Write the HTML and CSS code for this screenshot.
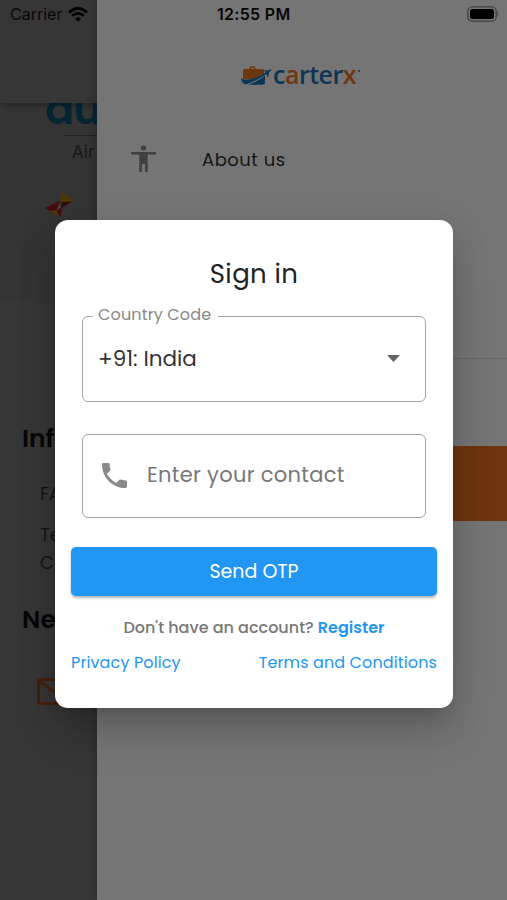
FILE: index.html
```html
<!DOCTYPE html>
<html lang="en">

<head>
    <meta charset="UTF-8">
    <meta name="viewport" content="width=device-width, initial-scale=1.0">
    <title>Sign in</title>
    <link rel="stylesheet" href="styles.css">
</head>

<body>
    <div class="phone">
        <!-- Home page -->
        <div class="home">
            <div class="app-bar"></div>
            <div class="partners">
                <div class="partner-logo">au</div>
                <div class="partner-line"></div>
                <div class="partner-name">Air</div>
                <svg class="partner-icon" width="30" height="26" viewBox="0 0 30 26">
                    <path d="M0 16 16 8 11 19 18 16 15 25Z" fill="#a01c20"/>
                    <path d="M14 9 30 8 13 18 18 9Z" fill="#701c20"/>
                    <path d="M16 0 30 9 21 10 15 9ZM5 19 11 18 15 25Z" fill="#a87a10"/>
                    <path d="m12 17 3-6 1 5Z" fill="#999"/>
                </svg>
            </div>
            <div class="footer">
                <h3>Info</h3>
                <p class="faq">FAQ</p>
                <p>Te<br>C</p>
                <h3 class="news">News</h3>
                <svg class="mail" width="34" height="27" viewBox="0 0 34 27" fill="none" stroke="#98481a" stroke-width="3">
                    <rect x="1.5" y="1.5" width="31" height="24" rx="2"/>
                    <path d="m2 3 15 11L32 3"/>
                </svg>
            </div>
        </div>

        <!-- Side menu -->
        <div class="drawer">
            <div class="brand">
                <svg width="32" height="20" viewBox="0 0 32 20">
                    <path d="M2 5q0-2 2-2h4.500V2.500q0-2.500 3-2.500t3 2.500V3H21q2 0 2 2v3l-10 5H2Z" fill="#f07a1f"/>
                    <path d="M10 3q0-1.500 1.500-1.500T13 3Z" fill="#fff"/>
                    <path d="M0 12q2 2 7 1.500Q17 12 25 6l-4-2 5 .6L31.500 3 28 6.500 27 12l-1.500-4Q17 14 5 18.500 0 17 0 12Z" fill="#1976b8"/>
                    <path d="M7 18.800Q18 15 24 9.500V16q0 2.800-2.500 2.800Z" fill="#1976b8"/>
                </svg>
                <span class="brand-name">c<b>a</b>rter<b>x</b></span><span class="brand-dot"></span>
            </div>
            <div class="menu-item">
                <svg width="25" height="28" viewBox="0 0 25 28" fill="#8c8c8c">
                    <circle cx="12.5" cy="3" r="2.600"/>
                    <path d="M0 7h25v2.500h-8.300V27h-2.700v-8h-3v8H8.300V9.500H0Z"/>
                </svg>
                <span>About us</span>
            </div>
            <div class="menu-divider"></div>
            <div class="menu-banner"></div>
        </div>

        <div class="status-bar">
            <div class="carrier">
                <span>Carrier</span>
                <svg width="20" height="15" viewBox="0 0 20 15" fill="none" stroke="#000" stroke-width="2.700">
                    <path d="M1 5.500q9-8.200 18 0M4.200 8.800q5.800-5 11.600 0"/>
                    <path d="m7 11.500q3-2.300 6 0L10 14.600Z" fill="#000" stroke="none"/>
                </svg>
            </div>
            <span class="time">12:55 PM</span>
            <svg class="battery" width="33" height="16" viewBox="0 0 33 16">
                <rect x="1.800" y=".8" width="28.400" height="14.400" rx="4.500" fill="none" stroke="#000" stroke-opacity=".45" stroke-width="1.300"/>
                <rect x="4" y="3" width="24" height="10" rx="2.500"/>
                <path d="M31.500 5.500q2 2.500 0 5Z" opacity=".5"/>
            </svg>
        </div>

        <!-- Sign in dialog -->
        <div class="overlay">
            <form class="dialog">
                <h2>Sign in</h2>
                <fieldset class="country">
                    <legend>Country Code</legend>
                    <span>+91: India</span>
                    <svg width="13" height="7" viewBox="0 0 13 7"><path d="M0 0h13L6.500 7Z" fill="#616161"/></svg>
                </fieldset>
                <div class="contact">
                    <svg width="25" height="25" viewBox="3 3 18 18" fill="#8a8a8a">
                        <path d="M6.620 10.790c1.440 2.830 3.760 5.140 6.590 6.590l2.200-2.200c.27-.27.670-.36 1.020-.24 1.120.37 2.330.57 3.570.57.550 0 1 .45 1 1V20c0 .55-.45 1-1 1-9.390 0-17-7.610-17-17 0-.55.450-1 1-1h3.500c.55 0 1 .45 1 1 0 1.250.2 2.450.57 3.570.11.350.03.740-.25 1.020l-2.200 2.200z"/>
                    </svg>
                    <span>Enter your contact</span>
                </div>
                <button type="button">Send OTP</button>
                <p class="register">Don't have an account? <a href="#">Register</a></p>
                <div class="links">
                    <a href="#">Privacy Policy</a>
                    <a href="#">Terms and Conditions</a>
                </div>
            </form>
        </div>
    </div>
</body>

</html>
```
FILE: styles.css
```css
* {
    box-sizing: border-box;
}

body {
    margin: 0;
    font-family: 'Poppins', 'Inter', sans-serif;
    color: #222;
}

h2,
h3,
p {
    margin: 0;
    font-weight: 400;
}

a {
    color: #2196f3;
    text-decoration: none;
}

svg {
    display: block;
    flex-shrink: 0;
}

.phone {
    position: relative;
    width: 507px;
    height: 900px;
    overflow: hidden;
    background-color: #757575;
}

/* Home page, dimmed behind the menu */
.home {
    width: 97px;
    height: 900px;
    overflow: hidden;
    background-color: #777;
}

.app-bar {
    position: relative;
    height: 103px;
    background-color: #777;
    box-shadow: 0 2px 6px rgba(0, 0, 0, 0.35);
}

.partners {
    height: 199px;
    background-color: #727272;
}

.partner-logo {
    height: 32px;
    padding-left: 45px;
    font-size: 43px;
    font-weight: 600;
    line-height: 13px;
    letter-spacing: -1px;
    color: #075374;
}

.partner-line {
    height: 1px;
    margin-left: 64px;
    background-color: #444;
}

.partner-name {
    padding: 4px 0 0 72px;
    font-family: 'Inter', sans-serif;
    font-size: 17px;
    line-height: 24px;
    color: #333;
}

.partner-icon {
    margin: 28px 0 0 45px;
}

.footer {
    padding: 121px 0 0 22px;
    color: #2a2a2a;
}

.footer h3 {
    height: 55px;
    font-size: 25px;
    font-weight: 600;
    line-height: 32px;
    color: #111;
}

.footer p {
    padding-left: 18px;
    font-size: 18px;
    line-height: 28px;
}

.footer .faq {
    height: 43px;
    line-height: 32px;
}

.footer .news {
    height: 101px;
    padding-top: 27px;
}

.mail {
    margin-left: 15px;
}

/* Side menu */
.drawer {
    position: absolute;
    top: 0;
    left: 97px;
    width: 410px;
    height: 900px;
    background-color: #fff;
    box-shadow: 0 0 12px rgba(0, 0, 0, 0.3);
}

.brand {
    display: flex;
    height: 131px;
    padding: 66px 0 0 144px;
}

.brand-name {
    font-family: 'Open Sans', sans-serif;
    font-size: 25px;
    font-weight: 600;
    line-height: 16px;
    letter-spacing: -0.5px;
    color: #1976b8;
}

.brand-name b {
    font-weight: 600;
    color: #ee7622;
}

.brand-dot {
    width: 2px;
    height: 2px;
    margin: 4px 0 0 2px;
    background-color: #888;
}

.menu-item {
    display: flex;
    gap: 46px;
    align-items: center;
    height: 56px;
    padding-left: 34px;
    font-size: 18px;
    letter-spacing: 0.5px;
    color: #333;
}

.menu-divider {
    height: 1px;
    margin-top: 171px;
    background-color: #e0e0e0;
}

.menu-banner {
    height: 75px;
    margin-top: 87px;
    background-color: #ef7323;
}

.status-bar {
    position: absolute;
    top: 0;
    left: 0;
    display: flex;
    align-items: center;
    justify-content: space-between;
    width: 507px;
    height: 28px;
    padding: 0 8px 0 10px;
    font-family: 'Inter', sans-serif;
    font-size: 16px;
    color: #111;
}

.carrier {
    display: flex;
    gap: 6px;
    align-items: center;
    width: 207px;
}

.time {
    margin-right: auto;
    font-weight: 600;
    letter-spacing: 0.3px;
}

/* Sign in dialog */
.overlay {
    position: absolute;
    top: 0;
    left: 0;
    width: 507px;
    height: 900px;
    padding: 220px 54px 0 55px;
    background-color: rgba(0, 0, 0, 0.54);
}

.dialog {
    height: 488px;
    padding: 34px 16px 0;
    border-radius: 13px;
    background-color: #fff;
    box-shadow: 0 14px 19px -9px rgba(0, 0, 0, 0.15), 0 26px 40px 2px rgba(0, 0, 0, 0.12), 0 8px 40px 2px rgba(0, 0, 0, 0.08);
}

.dialog h2 {
    font-size: 26px;
    line-height: 40px;
    letter-spacing: 0.4px;
    text-align: center;
}

.country {
    display: flex;
    align-items: center;
    justify-content: space-between;
    width: 344px;
    height: 96px;
    margin: 12px 11px 0;
    padding: 0 25px 11px 15px;
    border: 1.500px solid #a5a5a5;
    border-radius: 6px;
    font-size: 21.500px;
    color: #333;
}

.country legend {
    height: 20px;
    margin-left: -5px;
    padding: 0 7px 0 5px;
    font-size: 16px;
    line-height: 18px;
    letter-spacing: 0.150px;
    color: #888;
}

.contact {
    display: flex;
    gap: 20px;
    align-items: center;
    width: 344px;
    height: 84px;
    margin: 32px 11px 29px;
    padding: 0 19px 2px;
    border: 1.500px solid #a5a5a5;
    border-radius: 6px;
    font-size: 21px;
    letter-spacing: 0.300px;
    color: #777;
}

.contact span {
    padding-bottom: 2px;
}

.dialog button {
    display: block;
    width: 366px;
    height: 49px;
    padding: 0;
    border: 0;
    border-radius: 5px;
    background-color: #2196f3;
    box-shadow: 0 2px 3px rgba(0, 0, 0, 0.3);
    font-family: inherit;
    font-size: 19px;
    color: #fff;
}

.register {
    margin-top: 20px;
    font-size: 16px;
    font-weight: 500;
    line-height: 24px;
    text-align: center;
    color: #777;
}

.register a {
    font-weight: 600;
}

.links {
    display: flex;
    justify-content: space-between;
    margin-top: 11px;
    font-size: 16px;
    line-height: 24px;
    letter-spacing: 0.120px;
}
```
